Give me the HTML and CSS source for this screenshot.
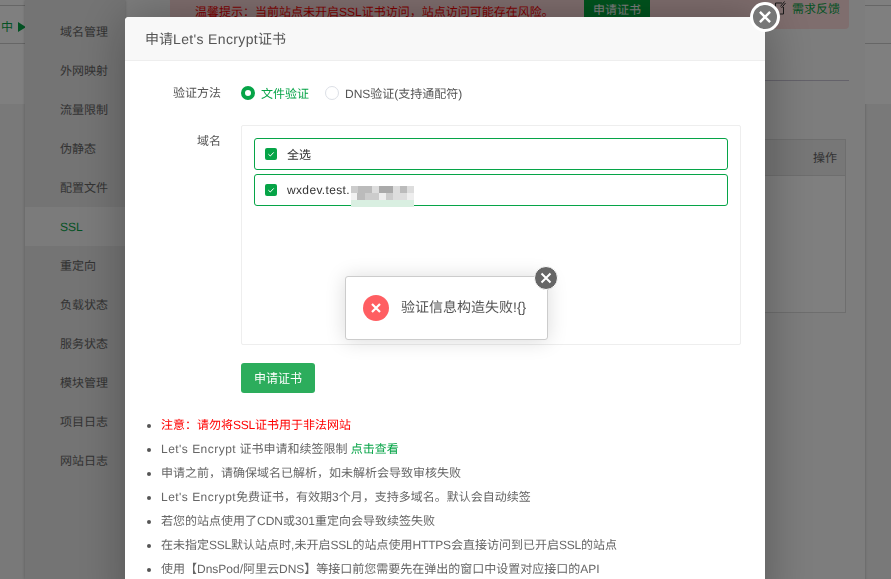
FILE: index.html
```html
<!DOCTYPE html>
<html lang="zh">
<head>
<meta charset="utf-8">
<title>申请Let's Encrypt证书</title>
<link rel="stylesheet" href="styles.css">
</head>
<body>
<div class="page">
  <div class="bg-left">
    <div class="bg-edge"><div class="bg-status">中<span class="tri"></span></div></div>
  </div>
  <nav class="side">
    <a>域名管理</a><a>外网映射</a><a>流量限制</a><a>伪静态</a><a>配置文件</a>
    <a class="on">SSL</a><a>重定向</a><a>负载状态</a><a>服务状态</a><a>模块管理</a><a>项目日志</a><a>网站日志</a>
  </nav>
  <div class="bg-main">
    <div class="warn">
      <span class="warn-text">温馨提示：当前站点未开启SSL证书访问，站点访问可能存在风险。</span>
      <span class="warn-btn">申请证书</span>
      <span class="warn-fb"><svg viewBox="0 0 12 14"><path d="M8 2H1.5v11h8V6M10.5.5 6.5 5.5M11.5 2 7.5 7" fill="none" stroke="#333" stroke-width="1"/></svg>需求反馈</span>
    </div>
    <div class="bg-rule"></div>
    <div class="bg-table"><div class="bg-th">操作</div></div>
  </div>
  <div class="bg-right">
    <div class="bg-edge"><div class="bg-status"></div></div>
  </div>
</div>
<div class="shade"></div>

<section class="dialog">
  <header class="dialog-head">申请<span class="latin">Let's Encrypt</span>证书</header>
  <div class="dialog-body">
    <div class="row row-method">
      <div class="label">验证方法</div>
      <div class="radios">
        <span class="radio checked"></span><span class="radio-text on">文件验证</span>
        <span class="radio"></span><span class="radio-text">DNS验证(支持通配符)</span>
      </div>
    </div>
    <div class="row row-domain">
      <div class="label">域名</div>
      <div class="domain-box">
        <div class="check-row"><span class="check"><svg viewBox="0 0 12 12"><path d="M3.4 6.2 5.3 8 8.7 4.4" fill="none" stroke="#fff" stroke-width="1"/></svg></span><span>全选</span></div>
        <div class="check-row"><span class="check"><svg viewBox="0 0 12 12"><path d="M3.4 6.2 5.3 8 8.7 4.4" fill="none" stroke="#fff" stroke-width="1"/></svg></span><span class="latin">wxdev.test.</span>
          <span class="blur" aria-hidden="true"></span>
        </div>
      </div>
    </div>
    <div class="row-submit"><button class="submit">申请证书</button></div>
    <ul class="notes">
      <li class="red">注意：请勿将<span class="caps">SSL</span>证书用于非法网站</li>
      <li><span class="latin">Let's Encrypt</span> 证书申请和续签限制 <a>点击查看</a></li>
      <li>申请之前，请确保域名已解析，如未解析会导致审核失败</li>
      <li><span class="latin">Let's Encrypt</span>免费证书，有效期3个月，支持多域名。默认会自动续签</li>
      <li>若您的站点使用了CDN或301重定向会导致续签失败</li>
      <li>在未指定<span class="caps">SSL</span>默认站点时,未开启<span class="caps">SSL</span>的站点使用<span class="caps">HTTPS</span>会直接访问到已开启<span class="caps">SSL</span>的站点</li>
      <li>使用【DnsPod/阿里云DNS】等接口前您需要先在弹出的窗口中设置对应接口的API</li>
    </ul>
  </div>
  <button class="dialog-close" aria-label="关闭"><svg viewBox="0 0 26 26"><path d="M7.5 7.5 18.5 18.5M18.5 7.5 7.5 18.5" stroke="#fff" stroke-width="2.6" fill="none"/></svg></button>
</section>

<div class="toast">
  <span class="toast-icon"><svg viewBox="0 0 26 26"><path d="M9 9 17 17M17 9 9 17" stroke="#fff" stroke-width="2.2" fill="none"/></svg></span>
  <span class="toast-text">验证信息构造失败!{}</span>
  <button class="toast-close" aria-label="关闭"><svg viewBox="0 0 22 22"><path d="M6.5 6.5 15.5 15.5M15.5 6.5 6.5 15.5" stroke="#fff" stroke-width="2" fill="none"/></svg></button>
</div>
</body>
</html>
```
FILE: styles.css
```css
* { box-sizing: border-box; }
html, body { margin: 0; height: 100%; overflow: hidden; }
body { font-family: "Liberation Sans", "Noto Sans CJK SC", sans-serif; font-size: 12px; color: #555; background: #fff; text-rendering: geometricPrecision; }
.latin { letter-spacing: .35px; }
.caps { letter-spacing: -.2px; }

.page { display: flex; width: 891px; height: 579px; background: #f2f2f2; }
.bg-left { width: 25px; flex: none; overflow: hidden; }
.bg-right { flex: 1; box-shadow: inset 2px 0 2px -1px rgba(0,0,0,.12); }
.bg-edge { height: 104px; background: #fff; padding-top: 5px; }
.bg-status { height: 39px; border-top: 1px solid #ccc; border-bottom: 1px solid #ccc; color: #06a447; display: flex; align-items: center; gap: 5px; white-space: nowrap; padding: 4px 0 0 1px; }
.tri { width: 0; height: 0; border-left: 8px solid #06a447; border-top: 5px solid transparent; border-bottom: 5px solid transparent; }

.side { width: 100px; flex: none; background: #e8e8e8; box-shadow: 0 0 3px rgba(0,0,0,.25); display: flex; flex-direction: column; padding-top: 12px; position: relative; }
.side a { height: 39px; line-height: 40px; padding-left: 35px; font-size: 12px; color: #666; }
.side a.on { background: #f6f6f6; color: #06a447; }

.bg-main { width: 740px; flex: none; background: #fbfbfb; padding-left: 45px; }
.warn { height: 29px; width: 679px; background: #ffdcdc; border-radius: 0 0 4px 4px; display: flex; font-size: 12px; color: #f00; padding-left: 25px; }
.warn-text { padding-top: 3px; width: 389px; white-space: nowrap; }
.warn-btn { width: 66px; height: 18px; background: #00a93c; color: #fff; text-align: center; line-height: 20px; }
.warn-fb { margin-left: 124px; display: flex; gap: 6px; color: #06a447; padding-top: 1px; line-height: 16px; }
.warn-fb svg { width: 12px; height: 14px; }
.bg-rule { margin-top: 51px; height: 1px; background: #c8c4d4; width: 679px; }
.bg-table { margin-top: 58px; width: 676px; height: 174px; border: 1px solid #ddd; background: #fff; }
.bg-th { height: 36px; text-align: right; padding: 11px 8px 0 0; line-height: 14px; background: #eee; border-bottom: 1px solid #ddd; font-size: 12px; color: #666; }

.shade { position: fixed; inset: 0; background: rgba(0,0,0,.5); }

.dialog { position: fixed; left: 125px; top: 17px; width: 640px; height: 600px; background: #fff; border-radius: 4px 4px 0 0; box-shadow: 1px 1px 50px rgba(0,0,0,.3); }
.dialog-head { height: 44px; line-height: 45px; padding-left: 20px; background: #f8f8f8; border-bottom: 1px solid #eee; font-size: 14px; color: #555; border-radius: 4px 4px 0 0; }
.dialog-close { position: absolute; right: -15px; top: -15px; width: 30px; height: 30px; padding: 0; border: 3px solid #fff; border-radius: 50%; background: #777; }
.dialog-close svg { display: block; width: 24px; height: 24px; }
.dialog-body { padding: 0 24px 0 0; }
.row { display: flex; }
.label { width: 96px; text-align: right; font-size: 12px; color: #555; line-height: 18px; flex: none; }
.row-method { padding-top: 23px; height: 64px; }
.radios { display: flex; align-items: center; margin-left: 20px; height: 18px; font-size: 12px; }
.radio { width: 14px; height: 14px; border-radius: 50%; border: 1px solid #dcdfe6; margin-right: 6px; }
.radio.checked { border: 4px solid #06a447; background: #fff; }
.radio-text { margin-right: 16px; color: #555; }
.radio-text.on { color: #06a447; }
.row-domain { height: 220px; }
.row-domain .label { padding-top: 8px; line-height: 16px; }
.domain-box { margin-left: 20px; width: 500px; height: 220px; border: 1px solid #eee; border-radius: 2px; padding: 12px; }
.check-row { position: relative; height: 32px; margin-bottom: 4px; border: 1px solid #06a447; border-radius: 3px; display: flex; align-items: center; padding-left: 10px; font-size: 12px; color: #333; width: 474px; }
.check { width: 12px; height: 12px; background: #06a447; border-radius: 2px; margin-right: 10px; flex: none; }
.check svg { display: block; width: 12px; height: 12px; }
.blur { position: absolute; left: 96px; top: 11px; width: 63px; height: 21px; background:
  linear-gradient(90deg, #ccc 0 7px, #bbb 7px 21px, #ddd 21px 28px, #aaa 28px 42px, #ddd 42px 49px, #bbb 49px 56px, #ddd 56px) 0 0 / 63px 7px no-repeat,
  linear-gradient(90deg, #f2f2f2 0 6px, #bbb 6px 14px, #ccc 14px 28px, #eee 28px 35px, #ccc 35px 42px, #ddd 42px 56px, #eee 56px) 0 7px / 63px 7px no-repeat,
  linear-gradient(#d9efe1, #d9efe1) 0 14px / 63px 7px no-repeat; }

.row-submit { padding: 18px 0 0 116px; }
.submit { width: 74px; height: 30px; border: 0; border-radius: 3px; background: #2cad5c; color: #fff; font: 12px "Liberation Sans", "Noto Sans CJK SC", sans-serif; padding: 0 0 1px; }
.notes { margin: 20px 0 0; padding: 0 0 0 36px; list-style: disc; font-size: 12px; color: #666; line-height: 24px; }
.notes .latin { letter-spacing: .47px; }
.notes .red { color: #f00; }
.notes a { color: #06a447; }
.notes li::marker { color: #555; }

.toast { position: fixed; left: 345px; top: 276px; width: 203px; height: 64px; background: #fff; border: 1px solid #ccc; border-radius: 3px; box-shadow: 0 1px 20px rgba(0,0,0,.15); display: flex; align-items: center; padding-left: 17px; }
.toast-icon { width: 26px; height: 26px; border-radius: 50%; background: #ff5e62; flex: none; }
.toast-icon svg { display: block; }
.toast-text { margin-left: 12px; font-size: 14px; color: #555; white-space: nowrap; position: relative; top: -1px; }
.toast-close { position: absolute; right: -11px; top: -11px; width: 24px; height: 24px; padding: 0; border: 1px solid #fff; border-radius: 50%; background: #666; }
.toast-close svg { display: block; width: 22px; height: 22px; }
```
